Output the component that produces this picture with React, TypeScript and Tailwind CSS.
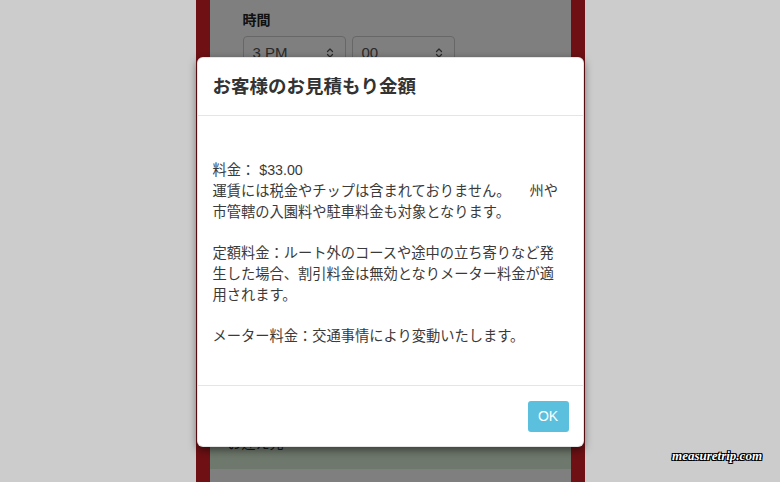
import React from 'react';
import { ChevronsUpDown } from 'lucide-react';

const bodyLines: string[] = [
  '料金： $33.00',
  '運賃には税金やチップは含まれておりません。　   州や',
  '市管轄の入園料や駐車料金も対象となります。',
  '',
  '定額料金：ルート外のコースや途中の立ち寄りなど発',
  '生した場合、割引料金は無効となりメーター料金が適',
  '用されます。',
  '',
  'メーター料金：交通事情により変動いたします。',
];

const TimeSelect: React.FC<{ value: string }> = ({ value }) => (
  <div className="flex h-[34px] w-[103px] items-center justify-between rounded-[4px] border border-[#cfcfcf] bg-white pl-[9px] pr-[9px] text-[15px] text-[#555]">
    <span>{value}</span>
    <ChevronsUpDown className="h-3 w-3 text-[#555]" strokeWidth={2.5} />
  </div>
);

const App: React.FC = () => {
  return (
    <div className="relative flex h-[482px] w-full justify-center overflow-hidden bg-[#cccccc] [font-family:'Liberation_Sans','Noto_Sans_CJK_JP',sans-serif]">
      {/* Phone screen */}
      <div className="relative h-full w-[389px]">
        <div className="flex h-full flex-col border-x-[14px] border-[#dc2028] bg-white">
          {/* Form behind the dialog */}
          <div className="pl-[33px] pt-[11px]">
            <div className="text-[14px] font-bold leading-[18px] text-[#222]">時間</div>
            <div className="mt-[7px] flex gap-[6px]">
              <TimeSelect value="3 PM" />
              <TimeSelect value="00" />
            </div>
          </div>
          <div className="mt-auto mb-[13px] bg-[#dff0d8] px-[18px] pb-[16px] pt-[14px] text-[14px] leading-[20px] text-[#333]">
            お迎え先
          </div>
        </div>

        {/* Backdrop */}
        <div className="absolute inset-0 bg-black/50" />

        {/* Dialog */}
        <div className="absolute left-px right-px top-[57px] overflow-hidden rounded-[6px] border border-black/10 bg-white shadow-[0_3px_9px_rgba(0,0,0,0.5)]">
          <div className="flex h-[58px] items-center border-b border-[#e5e5e5] px-[15px]">
            <h4 className="text-[18.5px] font-bold text-[#333]">お客様のお見積もり金額</h4>
          </div>
          <div className="px-[15px] pb-[38px] pt-[44px] text-[14.25px] leading-[20.75px] text-[#3a3a3a]">
            {bodyLines.map((line, i) => (
              <div key={i} className="h-[20.75px] whitespace-pre">
                {line}
              </div>
            ))}
          </div>
          <div className="flex h-[61px] justify-end border-t border-[#e5e5e5] px-[14px] pt-[15px]">
            <button className="h-[31px] w-[41px] rounded-[3px] bg-[#5bc0de] text-[14px] text-white">
              OK
            </button>
          </div>
        </div>
      </div>

      {/* Watermark */}
      <div className="absolute bottom-[17px] right-[18px] text-[13px] font-bold italic text-white [font-family:'Liberation_Serif',serif] [text-shadow:1px_1px_0_#000,-1px_-1px_0_#000,1px_-1px_0_#000,-1px_1px_0_#000,1px_0_0_#000,-1px_0_0_#000]">
        measuretrip.com
      </div>
    </div>
  );
};

export default App;
